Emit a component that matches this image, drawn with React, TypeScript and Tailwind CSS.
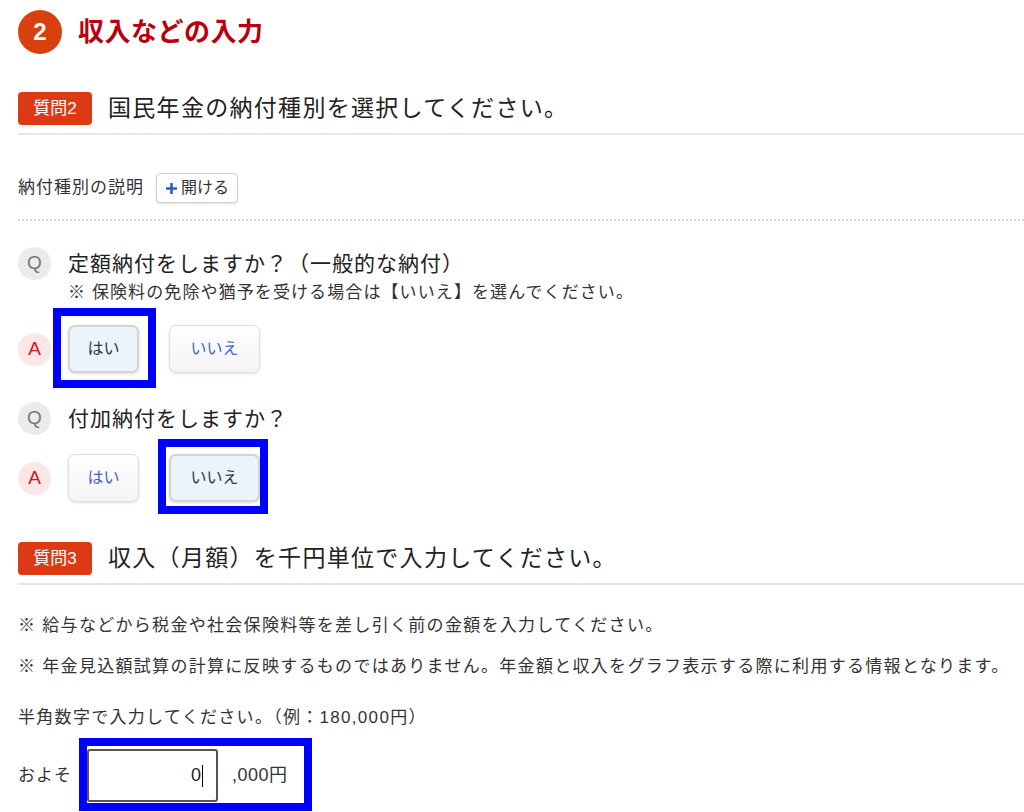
import React from "react"

const font = "font-['Liberation_Sans','Noto_Sans_CJK_JP',sans-serif]"

function QuestionBadge({ num, title }: { num: number; title: string }) {
  return (
    <div className="flex items-center gap-[16px] border-b-2 border-[#e6e6e6] pb-[8px]">
      <span className="flex h-[33px] w-[74px] items-center justify-center rounded-[4px] bg-[#dc3a15] text-[17px] text-white">
        質問{num}
      </span>
      <h2 className="text-[23px] leading-[33px] tracking-[1.3px] text-[#222]">{title}</h2>
    </div>
  )
}

function Circle({ kind }: { kind: "Q" | "A" }) {
  return (
    <span
      className={
        kind === "Q"
          ? "flex h-[33px] w-[33px] shrink-0 items-center justify-center rounded-full bg-[#ebebeb] text-[19px] text-[#777]"
          : "flex h-[33px] w-[33px] shrink-0 items-center justify-center rounded-full bg-[#fde6e6] text-[19px] text-[#d3131c]"
      }
    >
      {kind}
    </span>
  )
}

function Choice({
  label,
  selected,
  width,
  box,
}: {
  label: string
  selected?: boolean
  width: string
  box?: string
}) {
  return (
    <span className="relative">
      <button
        className={
          selected
            ? `h-[48px] ${width} rounded-[7px] border-2 border-[#d4d4d4] bg-[#ebf4fb] text-[16px] text-[#333] shadow-[0_1px_3px_rgba(0,0,0,0.15)]`
            : `h-[48px] ${width} rounded-[7px] border border-[#dedede] bg-gradient-to-b from-white to-[#f4f4f4] text-[16px] text-[#4563c6] shadow-[0_1px_3px_rgba(0,0,0,0.12)]`
        }
      >
        {label}
      </button>
      {box && <span className={`pointer-events-none absolute border-8 border-[#0000ff] ${box}`} />}
    </span>
  )
}

export default function App() {
  return (
    <div className={`min-h-[812px] w-[1024px] bg-white pl-[18px] text-[#333] ${font}`}>
      <div className="flex items-center gap-[16px] pt-[10px]">
        <span className="flex h-[44px] w-[44px] items-center justify-center rounded-full bg-[#d8400f] text-[24px] font-bold text-white">
          2
        </span>
        <h1 className="text-[26px] font-bold tracking-[0.5px] text-[#b8000f]">収入などの入力</h1>
      </div>

      <div className="mt-[38px]">
        <QuestionBadge num={2} title="国民年金の納付種別を選択してください。" />
      </div>

      <div className="mt-[38px] flex items-center gap-[12px]">
        <span className="text-[17px] tracking-[1px]">納付種別の説明</span>
        <button className="flex h-[30px] w-[82px] items-center justify-center gap-[3px] rounded-[4px] border border-[#d2d2d2] bg-white text-[16px] text-[#333] shadow-[0_1px_2px_rgba(0,0,0,0.12)]">
          <svg width="13" height="13" viewBox="0 0 13 13">
            <path d="M6.5 1v11M1 6.5h11" stroke="#2b5bd3" strokeWidth="2.6" />
          </svg>
          開ける
        </button>
      </div>

      <div className="mt-[16px] border-t-2 border-dotted border-[#d6d6d6]" />

      <div className="mt-[26px] flex gap-[17px]">
        <Circle kind="Q" />
        <div>
          <p className="text-[21px] leading-[33px] tracking-[1px] text-[#222]">定額納付をしますか？（一般的な納付）</p>
          <p className="text-[17px] leading-[26px] tracking-[1.1px]">※ 保険料の免除や猶予を受ける場合は【いいえ】を選んでください。</p>
        </div>
      </div>

      <div className="mt-[19px] flex items-center gap-[17px]">
        <Circle kind="A" />
        <div className="flex items-center gap-[30px]">
          <Choice label="はい" selected width="w-[71px]" box="-left-[15px] -top-[17px] -right-[17px] -bottom-[15px]" />
          <Choice label="いいえ" width="w-[91px]" />
        </div>
      </div>

      <div className="mt-[29px] flex items-center gap-[17px]">
        <Circle kind="Q" />
        <p className="text-[21px] leading-[33px] tracking-[1px] text-[#222]">付加納付をしますか？</p>
      </div>

      <div className="mt-[19px] flex items-center gap-[17px]">
        <Circle kind="A" />
        <div className="flex items-center gap-[30px]">
          <Choice label="はい" width="w-[71px]" />
          <Choice label="いいえ" selected width="w-[91px]" box="-left-[11px] -top-[15px] -right-[8px] -bottom-[12px]" />
        </div>
      </div>

      <div className="mt-[40px]">
        <QuestionBadge num={3} title="収入（月額）を千円単位で入力してください。" />
      </div>

      <p className="mt-[27px] text-[17px] leading-[28px] tracking-[1.3px]">※ 給与などから税金や社会保険料等を差し引く前の金額を入力してください。</p>
      <p className="mt-[13px] text-[17px] leading-[28px] tracking-[1.3px]">
        ※ 年金見込額試算の計算に反映するものではありません。年金額と収入をグラフ表示する際に利用する情報となります。
      </p>
      <p className="mt-[23px] text-[17px] leading-[28px] tracking-[1.3px]">半角数字で入力してください。（例：180,000円）</p>

      <div className="mt-[17px] flex items-center gap-[15px]">
        <span className="text-[17px] tracking-[1px]">およそ</span>
        <span className="relative flex items-center gap-[14px]">
          <span className="flex h-[53px] w-[131px] items-center justify-end rounded-[3px] border-2 border-[#555] pr-[13px] text-[18px] text-[#222]">
            0<span className="ml-[1px] h-[22px] w-[1px] bg-black" />
          </span>
          <span className="text-[18px] tracking-[0.5px]">,000円</span>
          <span className="pointer-events-none absolute -left-[8px] -top-[11px] -right-[24px] -bottom-[9px] border-8 border-[#0000ff]" />
        </span>
      </div>
    </div>
  )
}
